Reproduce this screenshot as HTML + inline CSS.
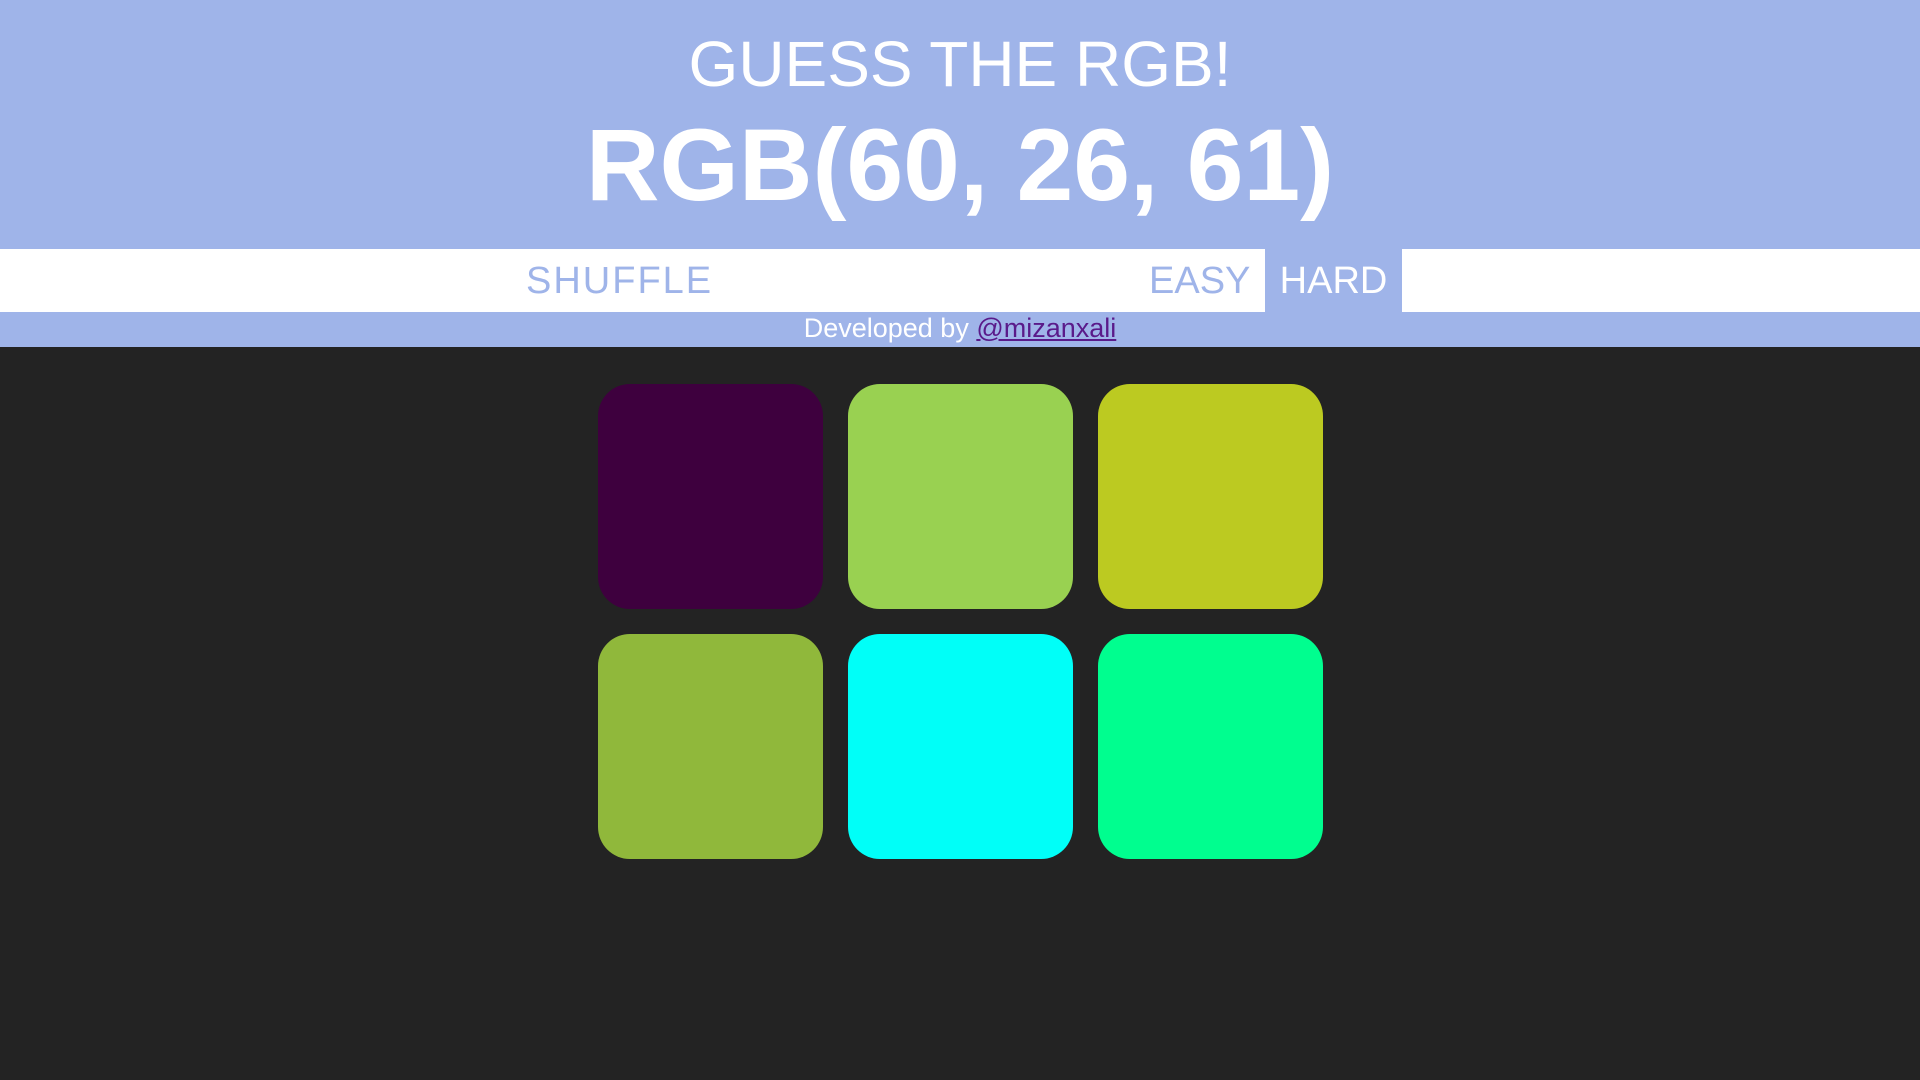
<!DOCTYPE html>
<html><head><meta charset="utf-8"><style>
*{margin:0;padding:0;box-sizing:border-box}
body{width:1920px;height:1080px;background:#232323;font-family:"Liberation Sans",sans-serif;overflow:hidden;position:relative}
.hdr{position:absolute;left:0;top:0;width:1920px;height:249px;background:#9fb4e9;color:#fff;text-align:center}
.t1{position:absolute;top:28px;width:100%;font-size:64px;line-height:72px}
.t2{position:absolute;top:108px;width:100%;font-size:102px;line-height:114px;font-weight:bold}
.bar{position:absolute;left:0;top:249px;width:1920px;height:63px;background:#fff;color:#9fb4e9;font-size:38px}
.bar span{position:absolute;top:1px;line-height:63px}
.hard{position:absolute;left:1265px;top:0;width:137px;height:63px;background:#9fb4e9;color:#fff;text-align:center;line-height:65px}
.dev{position:absolute;left:0;top:312px;width:1920px;height:35px;background:#9fb4e9;color:#fff;text-align:center;font-size:27px;line-height:33px}
.dev u{color:#5a1a8a}
.sq{position:absolute;width:225px;height:225px;border-radius:32px}
</style></head><body>
<div class="hdr"><div class="t1">GUESS THE RGB!</div><div class="t2">RGB(60, 26, 61)</div></div>
<div class="bar"><span style="left:526px;letter-spacing:2px">SHUFFLE</span><span style="left:1149px">EASY</span><div class="hard">HARD</div></div>
<div class="dev">Developed by <u>@mizanxali</u></div>
<div class="sq" style="left:598px;top:384px;background:#3e003e"></div>
<div class="sq" style="left:848px;top:384px;background:#99d151"></div>
<div class="sq" style="left:1098px;top:384px;background:#bcca21"></div>
<div class="sq" style="left:598px;top:634px;background:#90b83b"></div>
<div class="sq" style="left:848px;top:634px;background:#00fff8"></div>
<div class="sq" style="left:1098px;top:634px;background:#00fe8f"></div>
</body></html>
